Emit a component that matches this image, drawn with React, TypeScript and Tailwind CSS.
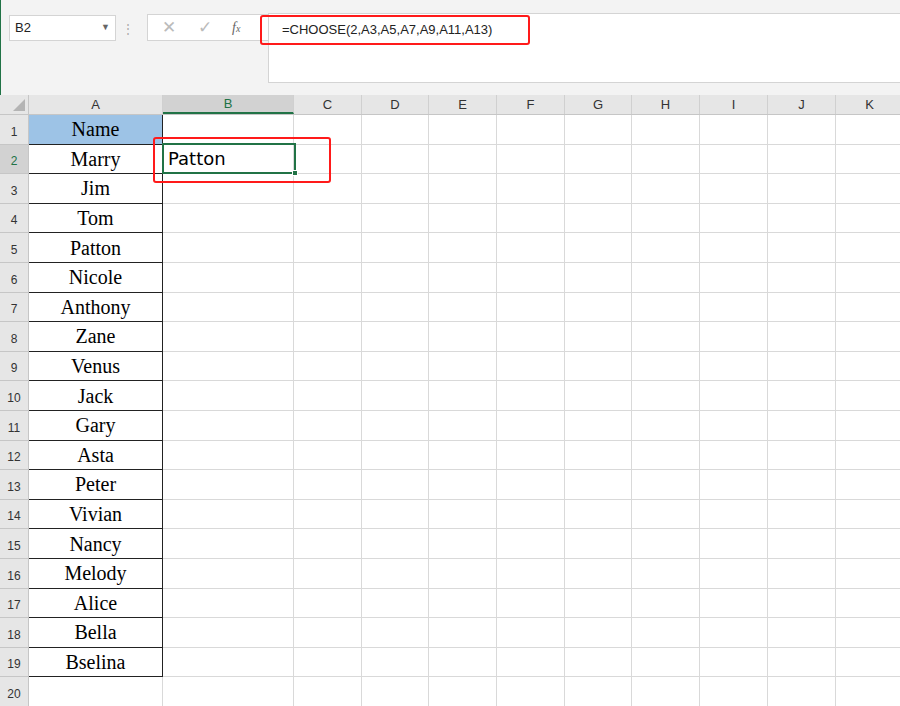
import React from "react";

const cols = [
  { n: "A", w: 134 }, { n: "B", w: 131 }, { n: "C", w: 68 }, { n: "D", w: 67 },
  { n: "E", w: 68 }, { n: "F", w: 68 }, { n: "G", w: 67 }, { n: "H", w: 68 },
  { n: "I", w: 68 }, { n: "J", w: 68 }, { n: "K", w: 68 },
];
const names = ["Name","Marry","Jim","Tom","Patton","Nicole","Anthony","Zane","Venus","Jack","Gary","Asta","Peter","Vivian","Nancy","Melody","Alice","Bella","Bselina"];

export default function App() {
  const rows = Array.from({ length: 21 }, (_, i) => i + 1);
  return (
    <div className="relative w-[900px] h-[706px] overflow-hidden bg-white" style={{ fontFamily: "'Segoe UI', 'Liberation Sans', Arial, sans-serif" }}>
      <div className="h-[95px] bg-[#f3f3f3] border-l border-[#217346] relative">
        <div className="absolute left-[8px] top-[15px] w-[107px] h-[26px] bg-white border border-[#d4d4d4] flex items-center justify-between px-[5px] text-[13px] text-[#222]">
          <span>B2</span>
          <span className="text-[9px] text-[#666]">▼</span>
        </div>
        <div className="absolute left-[121px] top-[20px] text-[#aaa] text-[12px]">⋮</div>
        <div className="absolute left-[146px] top-[14px] w-[122px] h-[27px] bg-white border border-[#d4d4d4] flex items-center text-[#bbb]">
          <span className="ml-[14px] text-[17px]">✕</span>
          <span className="ml-[22px] text-[17px]">✓</span>
          <span className="ml-[20px] text-[14px] italic text-[#666]" style={{ fontFamily: "'Liberation Serif', serif" }}>f<span className="text-[10px]">x</span></span>
        </div>
        <div className="absolute left-[267px] top-[13px] w-[640px] h-[70px] bg-white border border-[#d4d4d4] pl-[13px] pt-[6px] text-[13px] text-[#222]">
          =CHOOSE(2,A3,A5,A7,A9,A11,A13)
        </div>
        <div className="absolute left-[259px] top-[15px] w-[270px] h-[30px] border-[2.5px] border-[#ff1a1a] rounded-[3px]" />
      </div>
      <div className="flex h-[20px] bg-[#e6e6e6] border-b border-[#c6c6c6]">
        <div className="w-[29px] shrink-0 border-r border-[#c6c6c6] relative">
          <div className="absolute right-[3px] bottom-[3px] w-0 h-0 border-l-[12px] border-l-transparent border-b-[12px] border-b-[#b4b4b4]" />
        </div>
        {cols.map((c) => (
          <div key={c.n} style={{ width: c.w }} className={`shrink-0 flex items-center justify-center text-[13px] border-r border-[#d0d0d0] ${c.n === "B" ? "bg-[#d2d2d2] text-[#217346] border-b-2 border-b-[#217346]" : "text-[#333]"}`}>{c.n}</div>
        ))}
      </div>
      {rows.map((r) => (
        <div key={r} className="flex h-[29.6px]">
          <div className={`w-[29px] shrink-0 border-r border-b border-[#c6c6c6] flex items-end justify-center pb-[3px] text-[12px] ${r === 2 ? "bg-[#d2d2d2] text-[#217346]" : "bg-[#e6e6e6] text-[#333]"}`}>{r}</div>
          {cols.map((c, ci) => {
            const isName = ci === 0 && r <= 19;
            let cls = "shrink-0 border-r border-b border-[#d9d9d9] flex items-center";
            if (isName) cls = `shrink-0 flex items-center justify-center border-r border-b border-[#222] text-[20px] text-black ${r === 1 ? "bg-[#9dc3e6]" : ""}`;
            return (
              <div key={c.n} style={{ width: c.w, fontFamily: isName ? "'Liberation Serif', 'Times New Roman', serif" : undefined }} className={cls}>
                {isName ? names[r - 1] : ci === 1 && r === 2 ? <span className="pl-[5px] text-[18px] text-black" style={{ fontFamily: "'DejaVu Sans', sans-serif" }}>Patton</span> : null}
              </div>
            );
          })}
        </div>
      ))}
      <div className="absolute left-[162px] top-[143px] w-[134px] h-[31px] border-2 border-[#217346]" />
      <div className="absolute left-[292px] top-[170px] w-[6px] h-[6px] bg-[#217346] border border-white" />
      <div className="absolute left-[153px] top-[137px] w-[178px] h-[46px] border-[2.5px] border-[#ff1a1a] rounded-[3px]" />
    </div>
  );
}
